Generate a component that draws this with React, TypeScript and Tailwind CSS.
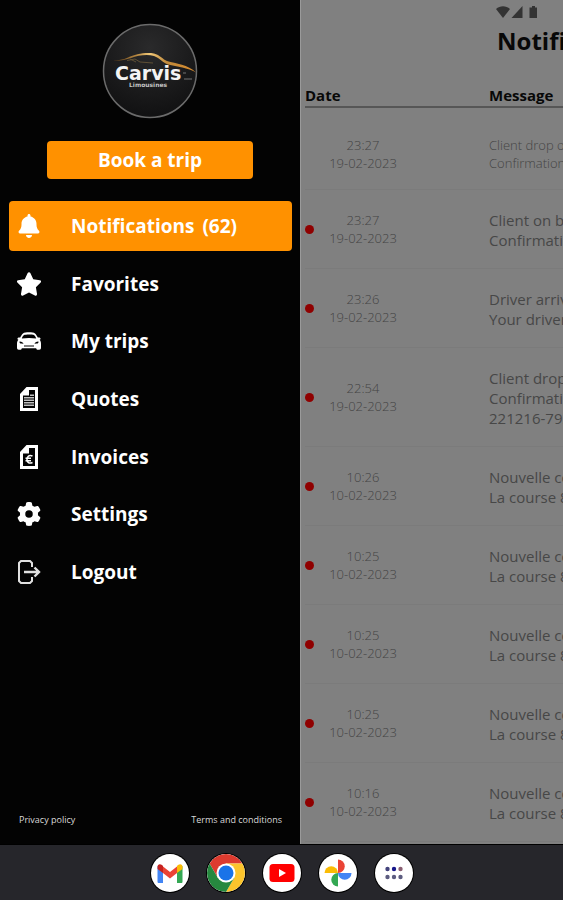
import React, { useState } from 'react';
import { FaBell, FaGear, FaStar } from 'react-icons/fa6';

interface Notification {
  time: string;
  date: string;
  lines: string[];
  unread: boolean;
}

const notifications: Notification[] = [
  { time: '23:27', date: '19-02-2023', lines: ['Client drop off', 'Confirmation'], unread: false },
  { time: '23:27', date: '19-02-2023', lines: ['Client on board', 'Confirmation'], unread: true },
  { time: '23:26', date: '19-02-2023', lines: ['Driver arrived', 'Your driver'], unread: true },
  { time: '22:54', date: '19-02-2023', lines: ['Client drop off', 'Confirmation', '221216-792'], unread: true },
  { time: '10:26', date: '10-02-2023', lines: ['Nouvelle course', 'La course 8'], unread: true },
  { time: '10:25', date: '10-02-2023', lines: ['Nouvelle course', 'La course 8'], unread: true },
  { time: '10:25', date: '10-02-2023', lines: ['Nouvelle course', 'La course 8'], unread: true },
  { time: '10:25', date: '10-02-2023', lines: ['Nouvelle course', 'La course 8'], unread: true },
  { time: '10:16', date: '10-02-2023', lines: ['Nouvelle course', 'La course 8'], unread: true },
];

const CarIcon = () => (
  <svg viewBox="0 0 24 24" className="size-6" fill="currentColor">
    <path
      fillRule="evenodd"
      d="M6 4.400C8 3 16 3 18 4.400c1.200.8 2.200 2.800 2.800 4.200 1 0 2.200 0 2.700.8.300.7-.2 1.100-.9 1.300.9 1 1.400 2.400 1.400 4V18.500c0 1.600-.6 2.200-1.800 2.200h-1.200c-1.100 0-1.600-.5-1.800-1.500H4.800c-.2 1-.7 1.500-1.800 1.500H1.800C.6 20.700 0 20.100 0 18.500v-3.800c0-1.600.5-3 1.400-4-.7-.2-1.200-.6-.9-1.300.5-.8 1.700-.8 2.700-.8C3.800 7.200 4.800 5.200 6 4.400zM7 6C6 6.700 5.200 8.200 4.800 9.600c4.400-.8 10-.8 14.400 0C18.800 8.200 18 6.700 17 6c-1.500-.8-8.500-.8-10 0zM2.600 12.400c-.4 1.200.4 2 1.700 2.200l2.200.2c-.3-1.500-2-2.500-3.900-2.400zm18.800 0c-1.900-.1-3.600.9-3.900 2.400l2.200-.2c1.300-.2 2.100-1 1.700-2.200zM7 16.400v1.200h10v-1.200z"
    />
  </svg>
);

const QuoteIcon = () => (
  <svg viewBox="0 0 24 24" className="size-6" fill="currentColor">
    <path fillRule="evenodd" d="M9.500 0H21v24H3V7zM12 3v5.500H6V21h12V3z" />
    <path fillOpacity="0.75" d="M7 10h10v1.500H7zM7 12.500h10V14H7zM7 15h10v1.500H7zM7 17.500h10V19H7zM13 7.500h4V9h-4z" />
  </svg>
);

const InvoiceIcon = () => (
  <svg viewBox="0 0 24 24" className="size-6" fill="currentColor">
    <path fillRule="evenodd" d="M9.500 0H21v24H3V7zM12 3v5.500H6V21h12V3z" />
    <path
      fill="none"
      stroke="currentColor"
      strokeWidth="1.500"
      d="M15.500 11c-3.500-1.500-5.500.5-5.500 3.500s2 4.500 5.500 3M8.500 13.300h5.500M8.500 15.800h5.500"
    />
  </svg>
);

const LogoutIcon = () => (
  <svg viewBox="0 0 24 26" className="h-[26px] w-6 text-[#e0e0e0]" fill="none" stroke="currentColor" strokeWidth="2">
    <path d="M15 8V4l-2-2H4L2 4v18l2 2h9l2-2v-4" />
    <path strokeWidth="2.400" d="M7 13h14M17.500 8.500L22 13l-4.500 4.500" />
  </svg>
);

const menuItems = [
  { id: 'notifications', label: 'Notifications', count: 62, icon: <FaBell className="size-6" /> },
  { id: 'favorites', label: 'Favorites', icon: <FaStar className="h-[26px] w-6 scale-110" /> },
  { id: 'trips', label: 'My trips', icon: <CarIcon /> },
  { id: 'quotes', label: 'Quotes', icon: <QuoteIcon /> },
  { id: 'invoices', label: 'Invoices', icon: <InvoiceIcon /> },
  { id: 'settings', label: 'Settings', icon: <FaGear className="size-6" /> },
  { id: 'logout', label: 'Logout', icon: <LogoutIcon /> },
];

const Logo = () => (
  <svg viewBox="0 0 96 96" className="size-24" role="img" aria-label="Carvis">
    <defs>
      <radialGradient id="disc" cx="0.5" cy="0.25" r="0.75">
        <stop offset="0" stopColor="#2a2a2b" />
        <stop offset="1" stopColor="#111112" />
      </radialGradient>
      <linearGradient id="gold" x1="0" x2="1">
        <stop offset="0" stopColor="#5a3814" />
        <stop offset="0.3" stopColor="#b98a42" />
        <stop offset="0.45" stopColor="#f1c878" />
        <stop offset="0.65" stopColor="#c08a3c" />
        <stop offset="1" stopColor="#d98b2c" />
      </linearGradient>
    </defs>
    <circle cx="48" cy="48" r="46.500" fill="url(#disc)" stroke="#6b6b6b" strokeWidth="1.500" />
    <path
      fill="url(#gold)"
      d="M10 38c6-1 11-1 16-3.500 7-3.500 18-5.500 26-4 6 1.500 9 6 13 7.500 9 2.500 21 3.500 29 11.500-8-5-19-5.500-28-8-5-1.500-8-6.500-14-8.500-7-2-16-.5-23 2-6 2-12 3-19 3z"
    />
    <path fill="none" stroke="#6d5a38" strokeWidth="0.8" d="M25 37.500l8-1.500 5 3 13 1M28 36l6 3" />
    <text x="13" y="57" fontSize="19" fontWeight="700" fill="#f4f4f4" className="font-['DejaVu_Sans',sans-serif]">
      Carvis
    </text>
    <text x="27" y="64" fontSize="6" fontWeight="700" fill="#c4c4c4" className="font-['DejaVu_Sans',sans-serif]">
      Limousines
    </text>
    <path stroke="#8a8a8a" strokeWidth="0.8" d="M82 56h8M81 50h3" />
  </svg>
);

const StatusIcons = () => (
  <svg viewBox="0 0 42 14" className="h-[14px] w-[42px]" fill="#333333" aria-hidden="true">
    <path d="M0 4C4 .2 10 .2 14 4L7 13z" />
    <path d="M26.500 1v12H15.500z" />
    <path d="M36 1h3v1.500h2V13h-7.500V2.500H36z" />
  </svg>
);

const GmailIcon = () => (
  <svg viewBox="0 0 38 38" className="size-full">
    <path fill="#4285f4" d="M6.500 12v15.500c0 1 .5 1.500 1.500 1.500h4V16z" />
    <path fill="#34a853" d="M31.500 12v15.500c0 1-.5 1.500-1.500 1.500h-4V16z" />
    <path fill="#ea4335" d="M12 12.500l7 5.500 7-5.500V19l-7 5.500-7-5.500z" />
    <path fill="#c5221f" d="M6.500 13c0-3 2.500-3.500 4.500-2l1 1V19l-5.500-4z" />
    <path fill="#fbbc04" d="M31.500 13c0-3-2.500-3.500-4.500-2l-1 1V19l5.500-4z" />
  </svg>
);

const ChromeIcon = () => (
  <svg viewBox="0 0 38 38" className="size-full">
    <path fill="#dd3b2f" d="M19 0a19 19 0 0 1 16.450 9.500H19L10.770 23.750 2.550 9.500A19 19 0 0 1 19 0z" />
    <path fill="#fcc42c" d="M35.450 9.500A19 19 0 0 1 19 38l8.230-14.250L19 9.500z" />
    <path fill="#26883f" d="M2.550 9.500A19 19 0 0 0 19 38l8.230-14.250H10.770z" />
    <circle cx="19" cy="19" r="9.500" fill="#fff" />
    <circle cx="19" cy="19" r="7.500" fill="#1a73e8" />
  </svg>
);

const YoutubeIcon = () => (
  <svg viewBox="0 0 38 38" className="size-full">
    <rect x="6.500" y="10" width="25" height="18" rx="3.500" fill="#ff0000" />
    <path fill="#fff" d="M16 15l7 4-7 4z" />
  </svg>
);

const PhotosIcon = () => (
  <svg viewBox="0 0 38 38" className="size-full">
    <path fill="#ea4335" d="M19 5.500a6.750 6.750 0 0 1 0 13.500z" />
    <path fill="#4285f4" d="M32.500 19a6.750 6.750 0 0 1-13.500 0z" />
    <path fill="#34a853" d="M19 32.500a6.750 6.750 0 0 1 0-13.500z" />
    <path fill="#fbbc04" d="M5.500 19a6.750 6.750 0 0 1 13.500 0z" />
  </svg>
);

const AppsIcon = () => (
  <svg viewBox="0 0 38 38" className="size-full">
    <circle cx="12.500" cy="15" r="2.200" fill="#43437c" />
    <circle cx="19" cy="15" r="2.200" fill="#17178a" />
    <circle cx="25.500" cy="15" r="2.200" fill="#8a5f72" />
    <circle cx="12.500" cy="23" r="2.200" fill="#5c5c80" />
    <circle cx="19" cy="23" r="2.200" fill="#5c5c80" />
    <circle cx="25.500" cy="23" r="2.200" fill="#5c5c80" />
  </svg>
);

const dockApps = [
  { name: 'Gmail', icon: <GmailIcon /> },
  { name: 'Chrome', icon: <ChromeIcon /> },
  { name: 'YouTube', icon: <YoutubeIcon /> },
  { name: 'Photos', icon: <PhotosIcon /> },
  { name: 'All apps', icon: <AppsIcon /> },
];

function App() {
  const [active, setActive] = useState('notifications');

  return (
    <div className="min-h-screen flex flex-col bg-[#26262b] font-['Open_Sans',sans-serif]">
      <div className="flex flex-1 border-b border-black">
        <aside className="w-[300px] shrink-0 flex flex-col bg-[#030303] text-white">
          <div className="flex justify-center pt-[23px]">
            <Logo />
          </div>
          <button className="mx-[47px] mt-[22px] h-[38px] rounded bg-[#ff9100] text-[19px] leading-6 font-bold">
            Book a trip
          </button>

          <nav className="mt-[22px] ml-[9px] mr-2">
            <ul className="h-[396px] flex flex-col justify-between">
              {menuItems.map(item => (
                <li key={item.id}>
                  <button
                    onClick={() => setActive(item.id)}
                    className={`w-full h-[50px] flex items-center pl-2 rounded text-left text-[19px] leading-6 font-bold ${
                      item.id === active ? 'bg-[#ff9100]' : ''
                    }`}
                  >
                    <span className="w-[54px] shrink-0">{item.icon}</span>
                    <span>{item.label}</span>
                    {item.count && <span className="ml-2">({item.count})</span>}
                  </button>
                </li>
              ))}
            </ul>
          </nav>

          <div className="mt-auto flex justify-between pl-[19px] pr-[18px] pb-4 text-[9px] leading-4 text-[#d8d8d8]">
            <a href="#privacy">Privacy policy</a>
            <a href="#terms">Terms and conditions</a>
          </div>
        </aside>

        <main className="flex-1 min-w-0 overflow-hidden bg-[#808080] border-l border-[#9a9a9a]">
          <div className="w-[540px] pl-1">
            <div className="flex justify-center pt-[5px] pr-28">
              <StatusIcons />
            </div>
            <h1 className="mt-1 pl-1 text-center text-2xl leading-9 font-bold text-[#080808]">Notifications</h1>

            <table className="mt-[26px] w-full table-fixed border-separate border-spacing-0 text-left">
              <colgroup>
                <col className="w-6" />
                <col className="w-40" />
                <col />
              </colgroup>
              <thead>
                <tr className="text-[15px] leading-5 text-[#080808]">
                  <th colSpan={2} className="pb-px border-b-2 border-[#565656] font-bold">Date</th>
                  <th className="pb-px border-b-2 border-[#565656] font-bold">Message</th>
                </tr>
              </thead>
              <tbody>
                <tr className="h-[11px]" aria-hidden="true" />
                {notifications.map((n, i) => (
                  <tr key={i}>
                    <td className="border-b border-[#7b7b7b]">
                      {n.unread && <div className="size-[9px] rounded-full bg-[#8f0000]" />}
                    </td>
                    <td className="border-b border-[#7b7b7b] text-[13px] leading-[18px] font-light text-[#444444]">
                      <div className="w-[68px] text-center whitespace-nowrap">
                        {n.time}
                        <br />
                        {n.date}
                      </div>
                    </td>
                    <td
                      className={`border-b border-[#7b7b7b] whitespace-nowrap ${
                        n.unread
                          ? 'pt-5 pb-[18px] text-[15px] leading-5 text-[#474747]'
                          : 'py-[17px] text-[13px] leading-[18px] font-light text-[#444444]'
                      }`}
                    >
                      {n.lines.map(line => (
                        <div key={line}>{line}</div>
                      ))}
                    </td>
                  </tr>
                ))}
              </tbody>
            </table>
          </div>
        </main>
      </div>

      <footer className="h-[55px] flex items-center justify-center gap-[18px]">
        {dockApps.map(app => (
          <button
            key={app.name}
            aria-label={app.name}
            className="size-[38px] rounded-full bg-white overflow-hidden ring-1 ring-black"
          >
            {app.icon}
          </button>
        ))}
      </footer>
    </div>
  );
}

export default App;
